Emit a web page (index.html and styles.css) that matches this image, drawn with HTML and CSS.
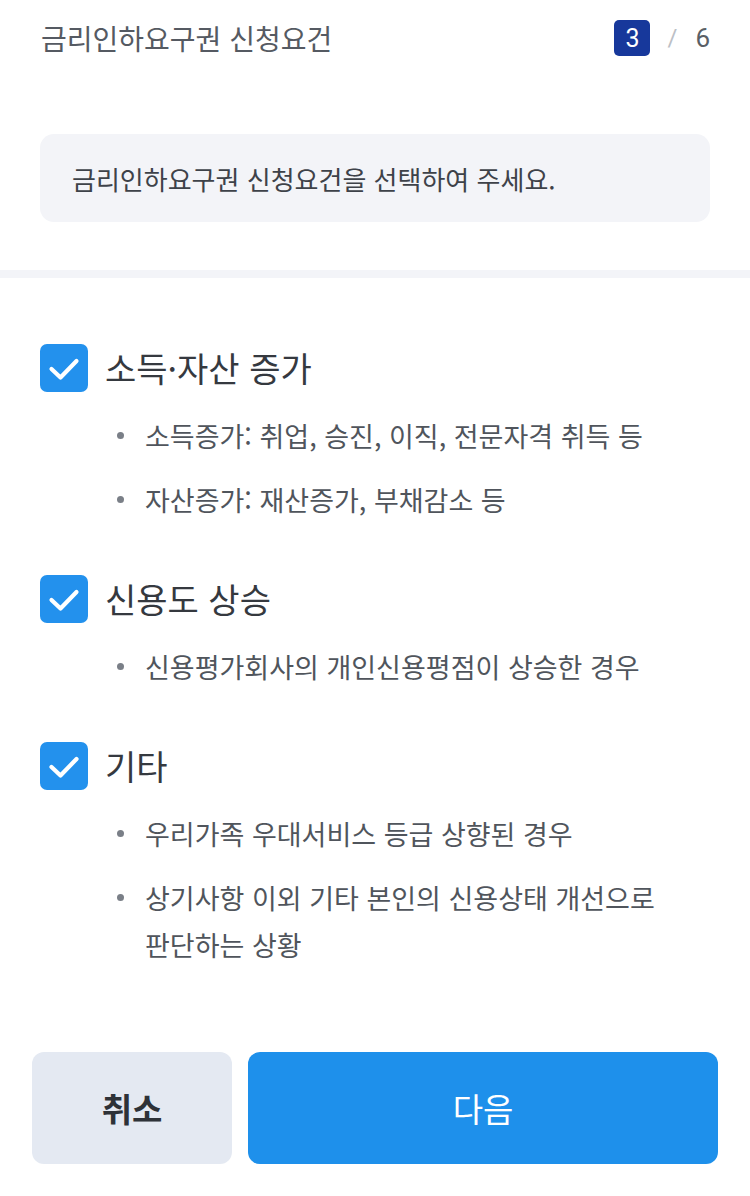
FILE: index.html
```html
<!DOCTYPE html>
<html lang="ko">
<head>
    <meta charset="UTF-8">
    <meta name="viewport" content="width=device-width, initial-scale=1.0">
    <title>금리인하요구권 신청요건</title>
    <link rel="stylesheet" href="styles.css">
</head>
<body>
    <div class="page">
        <header class="top-bar">
            <h1 class="title">금리인하요구권 신청요건</h1>
            <div class="step">
                <span class="step-current">3</span>
                <span class="step-slash">/</span>
                <span class="step-total">6</span>
            </div>
        </header>

        <div class="notice">금리인하요구권 신청요건을 선택하여 주세요.</div>

        <div class="divider"></div>

        <div class="options">
            <section class="option">
                <label class="option-head">
                    <span class="check">
                        <svg viewBox="0 0 48 48" width="48" height="48"><path d="M11.5 25 L20.5 33.5 L36.5 17" fill="none" stroke="#fff" stroke-width="4.2" stroke-linecap="round" stroke-linejoin="round"/></svg>
                    </span>
                    <span class="option-label">소득·자산 증가</span>
                </label>
                <ul class="details">
                    <li>소득증가: 취업, 승진, 이직, 전문자격 취득 등</li>
                    <li>자산증가: 재산증가, 부채감소 등</li>
                </ul>
            </section>

            <section class="option">
                <label class="option-head">
                    <span class="check">
                        <svg viewBox="0 0 48 48" width="48" height="48"><path d="M11.5 25 L20.5 33.5 L36.5 17" fill="none" stroke="#fff" stroke-width="4.2" stroke-linecap="round" stroke-linejoin="round"/></svg>
                    </span>
                    <span class="option-label">신용도 상승</span>
                </label>
                <ul class="details">
                    <li>신용평가회사의 개인신용평점이 상승한 경우</li>
                </ul>
            </section>

            <section class="option">
                <label class="option-head">
                    <span class="check">
                        <svg viewBox="0 0 48 48" width="48" height="48"><path d="M11.5 25 L20.5 33.5 L36.5 17" fill="none" stroke="#fff" stroke-width="4.2" stroke-linecap="round" stroke-linejoin="round"/></svg>
                    </span>
                    <span class="option-label">기타</span>
                </label>
                <ul class="details">
                    <li>우리가족 우대서비스 등급 상향된 경우</li>
                    <li>상기사항 이외 기타 본인의 신용상태 개선으로 판단하는 상황</li>
                </ul>
            </section>
        </div>

        <footer class="actions">
            <button class="btn btn-cancel">취소</button>
            <button class="btn btn-next">다음</button>
        </footer>
    </div>
</body>
</html>
```

FILE: styles.css
```css
* {
    margin: 0;
    padding: 0;
    box-sizing: border-box;
}

body {
    font-family: "Noto Sans CJK KR", "Noto Sans", sans-serif;
    background: #fff;
    color: #33373d;
    word-break: keep-all;
}

.page {
    min-height: 100vh;
    display: flex;
    flex-direction: column;
}

/* header */
.top-bar {
    display: flex;
    align-items: center;
    justify-content: space-between;
    padding: 20px 40px 0 41px;
    height: 56px;
}

.title {
    font-size: 28px;
    font-weight: 400;
    color: #555a62;
}

.step {
    display: flex;
    align-items: center;
    font-family: Roboto, "Noto Sans", sans-serif;
}

.step-current {
    width: 36px;
    height: 36px;
    border-radius: 5px;
    background: #17389b;
    color: #fff;
    font-size: 25px;
    display: grid;
    place-items: center;
}

.step-slash {
    color: #bcc0c6;
    font-size: 24px;
    margin: 0 18px 0 17px;
}

.step-total {
    color: #5a5f66;
    font-size: 26px;
}

/* notice box */
.notice {
    margin: 78px 40px 0;
    height: 88px;
    padding: 0 32px;
    display: flex;
    align-items: center;
    background: #f3f4f8;
    border-radius: 14px;
    font-size: 26px;
    color: #3e4249;
}

.divider {
    margin-top: 48px;
    height: 8px;
    background: #f3f4f8;
}

/* options */
.options {
    padding: 66px 40px 0;
    display: flex;
    flex-direction: column;
    gap: 52px;
}

.option-head {
    display: flex;
    align-items: center;
    gap: 17px;
}

.check {
    width: 48px;
    height: 48px;
    border-radius: 7px;
    background: #2391ed;
    display: block;
    flex-shrink: 0;
}

.check svg {
    display: block;
}

.option-label {
    font-size: 34px;
    color: #35393f;
    line-height: 48px;
}

.details {
    list-style: none;
    margin-top: 20px;
    padding-left: 105px;
}

.details li {
    position: relative;
    font-size: 27px;
    line-height: 47px;
    color: #50555c;
}

.details li + li {
    margin-top: 17px;
}

.details li::before {
    content: "";
    position: absolute;
    left: -28px;
    top: 20px;
    width: 7px;
    height: 7px;
    border-radius: 50%;
    background: #7a7f87;
}

/* footer buttons */
.actions {
    margin-top: auto;
    display: flex;
    gap: 16px;
    padding: 0 32px 32px;
}

.btn {
    height: 112px;
    border: none;
    border-radius: 12px;
    font-family: "Noto Sans CJK KR", sans-serif;
    cursor: pointer;
}

.btn-cancel {
    width: 200px;
    background: #e4e9f2;
    color: #2e3238;
    font-size: 33px;
    font-weight: 700;
}

.btn-next {
    flex: 1;
    background: #1e90eb;
    color: #fff;
    font-size: 33px;
    font-weight: 400;
}
```
